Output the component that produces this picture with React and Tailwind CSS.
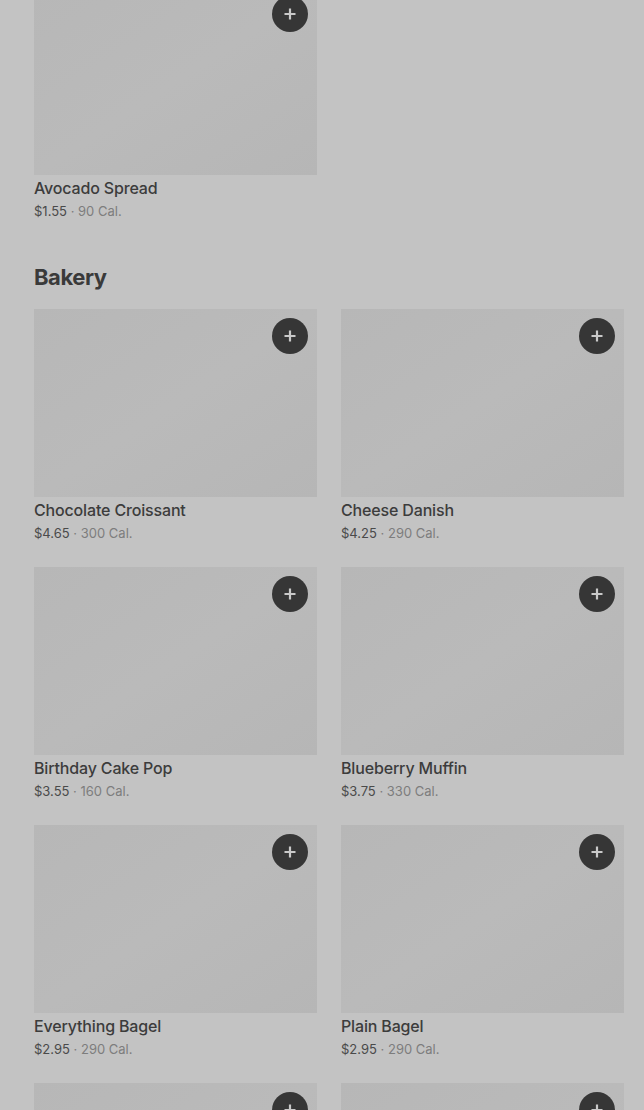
const first = [{ name: "Avocado Spread", price: "$1.55", cal: "90 Cal." }];

const bakery = [
  { name: "Chocolate Croissant", price: "$4.65", cal: "300 Cal." },
  { name: "Cheese Danish", price: "$4.25", cal: "290 Cal." },
  { name: "Birthday Cake Pop", price: "$3.55", cal: "160 Cal." },
  { name: "Blueberry Muffin", price: "$3.75", cal: "330 Cal." },
  { name: "Everything Bagel", price: "$2.95", cal: "290 Cal." },
  { name: "Plain Bagel", price: "$2.95", cal: "290 Cal." },
  { name: null },
  { name: null },
];

function Item({ item }) {
  return (
    <div className="flex flex-col">
      <div className="relative h-[188px] bg-gradient-to-br from-[#b7b7b7] via-[#bababa] to-[#b6b6b6]">
        <button className="absolute top-[9px] right-[9px] w-9 h-9 rounded-full bg-[#363636] flex items-center justify-center">
          <svg width="14" height="14" viewBox="0 0 14 14">
            <path d="M7 1.5v11M1.5 7h11" stroke="#c9c9c9" strokeWidth="2.2" />
          </svg>
        </button>
      </div>
      {item.name && (
        <>
          <p className="pt-[3px] text-[16px] leading-5 font-medium tracking-[-0.01em] text-[#3c3c3c]">{item.name}</p>
          <p className="mt-[3px] text-[13px] leading-5 text-[#4a4a4a]">
            {item.price}
            <span className="text-[#7d7d7d]"> · {item.cal}</span>
          </p>
        </>
      )}
    </div>
  );
}

export default function App() {
  return (
    <div
      className="w-full h-[1110px] overflow-hidden bg-[#c3c3c3] pl-[34px] pr-[20px]"
      style={{ fontFamily: "Inter, 'Noto Sans', sans-serif" }}
    >
      <div className="grid grid-cols-2 gap-x-6 gap-y-6 -mt-[13px]">
        {first.map((it) => (
          <Item key={it.name} item={it} />
        ))}
      </div>

      <h2 className="mt-10 mb-4 text-[22px] leading-8 font-bold tracking-[-0.02em] text-[#3a3a3a]">Bakery</h2>

      <div className="grid grid-cols-2 gap-x-6 gap-y-6">
        {bakery.map((it, i) => (
          <Item key={i} item={it} />
        ))}
      </div>
    </div>
  );
}
